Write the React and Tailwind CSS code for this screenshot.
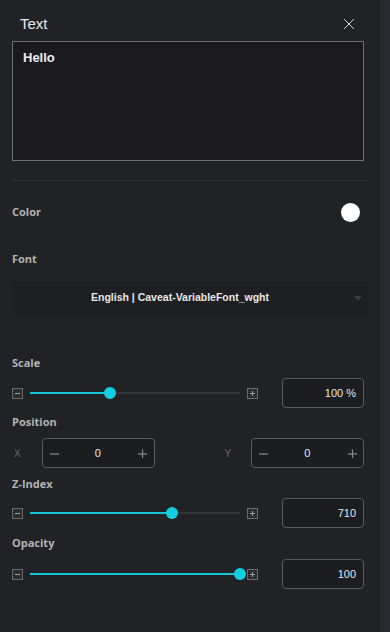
import { X } from 'lucide-react';

const sans = { fontFamily: '"Liberation Sans", Arial, sans-serif' };

function BoxIcon({ plus }) {
    return (
        <svg width="11" height="11" viewBox="0 0 11 11" className="shrink-0">
            <rect x="0.5" y="0.5" width="10" height="10" fill="#2b2c30" stroke="#6a6a6a" />
            <line x1="3" y1="5.5" x2="8" y2="5.5" stroke="#a0a0a0" strokeWidth="1" />
            {plus && <line x1="5.5" y1="3" x2="5.5" y2="8" stroke="#a0a0a0" strokeWidth="1" />}
        </svg>
    );
}

function Label({ children, className = '' }) {
    return (
        <div className={`font-['Open_Sans',sans-serif] font-bold text-[11px] text-[#b4b4b4] px-3 ${className}`}>
            {children}
        </div>
    );
}

function SliderRow({ pct, value }) {
    return (
        <div className="flex items-center h-[30px] pl-3 pr-4">
            <BoxIcon />
            <div className="relative mx-[7px] w-[210px] h-[2px] bg-[#333438]">
                <div className="absolute left-0 top-0 h-[2px] bg-[#16c3d6]" style={{ width: `${pct}%` }} />
                <div
                    className="absolute top-1/2 w-[12px] h-[12px] -translate-x-1/2 -translate-y-1/2 rounded-full bg-[#12cde0]"
                    style={{ left: `${pct}%` }}
                />
            </div>
            <BoxIcon plus />
            <div
                className="ml-auto w-[82px] h-[30px] rounded-[4px] border border-[#5c5c5c] bg-[#1c1d20] flex items-center justify-end pr-[7px] text-[11px] text-[#e6e6e6]"
                style={sans}
            >
                {value}
            </div>
        </div>
    );
}

function Stepper() {
    return (
        <div className="w-[113px] h-[30px] rounded-[4px] border border-[#5c5c5c] bg-[#1c1d20] flex items-center justify-between pl-[7px] pr-[6px]" style={sans}>
            <svg width="9" height="9" viewBox="0 0 9 9">
                <line x1="0" y1="5" x2="9" y2="5" stroke="#8a8a8a" strokeWidth="1.2" />
            </svg>
            <span className="text-[11px] text-[#e6e6e6] -ml-[2px]">0</span>
            <svg width="9" height="9" viewBox="0 0 9 9">
                <line x1="0" y1="5" x2="9" y2="5" stroke="#8a8a8a" strokeWidth="1.2" />
                <line x1="4.5" y1="0.5" x2="4.5" y2="9.5" stroke="#8a8a8a" strokeWidth="1.2" />
            </svg>
        </div>
    );
}

export default function App() {
    return (
        <div className="flex w-[390px] h-[632px] overflow-hidden">
            <div className="w-[380px] h-full bg-[#212225] flex flex-col">
                <div className="flex items-center justify-between h-[48px] pl-5 pr-[22px]">
                    <span className="text-[15px] text-[#e8e8e8]" style={sans}>Text</span>
                    <X size={18} strokeWidth={1.3} color="#e0e0e0" />
                </div>
                <div className="mx-3 -mt-[7px] h-[120px] w-[352px] border border-[#6e6e70] bg-[#1a1a1e] px-[10px] pt-[2px]">
                    <span className="font-bold text-[13px] text-[#ececec]" style={sans}>Hello</span>
                </div>
                <div className="mx-3 mt-[19px] h-px bg-[#2f3034]" />
                <div className="flex items-center justify-between h-[62px] pr-[20px]">
                    <Label>Color</Label>
                    <div className="w-[19px] h-[19px] rounded-full bg-white" />
                </div>
                <Label className="h-[24px] leading-[18px] mt-[7px]">Font</Label>
                <div className="mx-3 mt-[7px] h-[34px] bg-[#1e1f22] relative flex items-center justify-center pr-[20px]">
                    <span className="text-[10.5px] font-bold text-[#e8e8e8]" style={sans}>English | Caveat-VariableFont_wght</span>
                    <svg width="8" height="5" viewBox="0 0 8 5" className="absolute right-[6px] top-[15px]">
                        <path d="M0 0 L8 0 L4 5 Z" fill="#3a3b3f" />
                    </svg>
                </div>
                <Label className="mt-[40px] h-[16px] leading-[16px]">Scale</Label>
                <div className="mt-[7px]">
                    <SliderRow pct={38} value="100 %" />
                </div>
                <Label className="mt-[6px] h-[16px] leading-[16px]">Position</Label>
                <div className="flex items-center mt-[8px] h-[30px] pr-4">
                    <span className="w-[42px] pl-[14px] text-[10px] text-[#6b6b6b]" style={sans}>X</span>
                    <Stepper />
                    <span className="w-[97px] pl-[70px] text-[10px] text-[#6b6b6b]" style={sans}>Y</span>
                    <Stepper />
                </div>
                <Label className="mt-[8px] h-[16px] leading-[16px]">Z-Index</Label>
                <div className="mt-[6px]">
                    <SliderRow pct={67.6} value="710" />
                </div>
                <Label className="mt-[7px] h-[16px] leading-[16px]">Opacity</Label>
                <div className="mt-[8px]">
                    <SliderRow pct={100} value="100" />
                </div>
            </div>
            <div className="w-[10px] h-full bg-[#272a31]" />
        </div>
    );
}
